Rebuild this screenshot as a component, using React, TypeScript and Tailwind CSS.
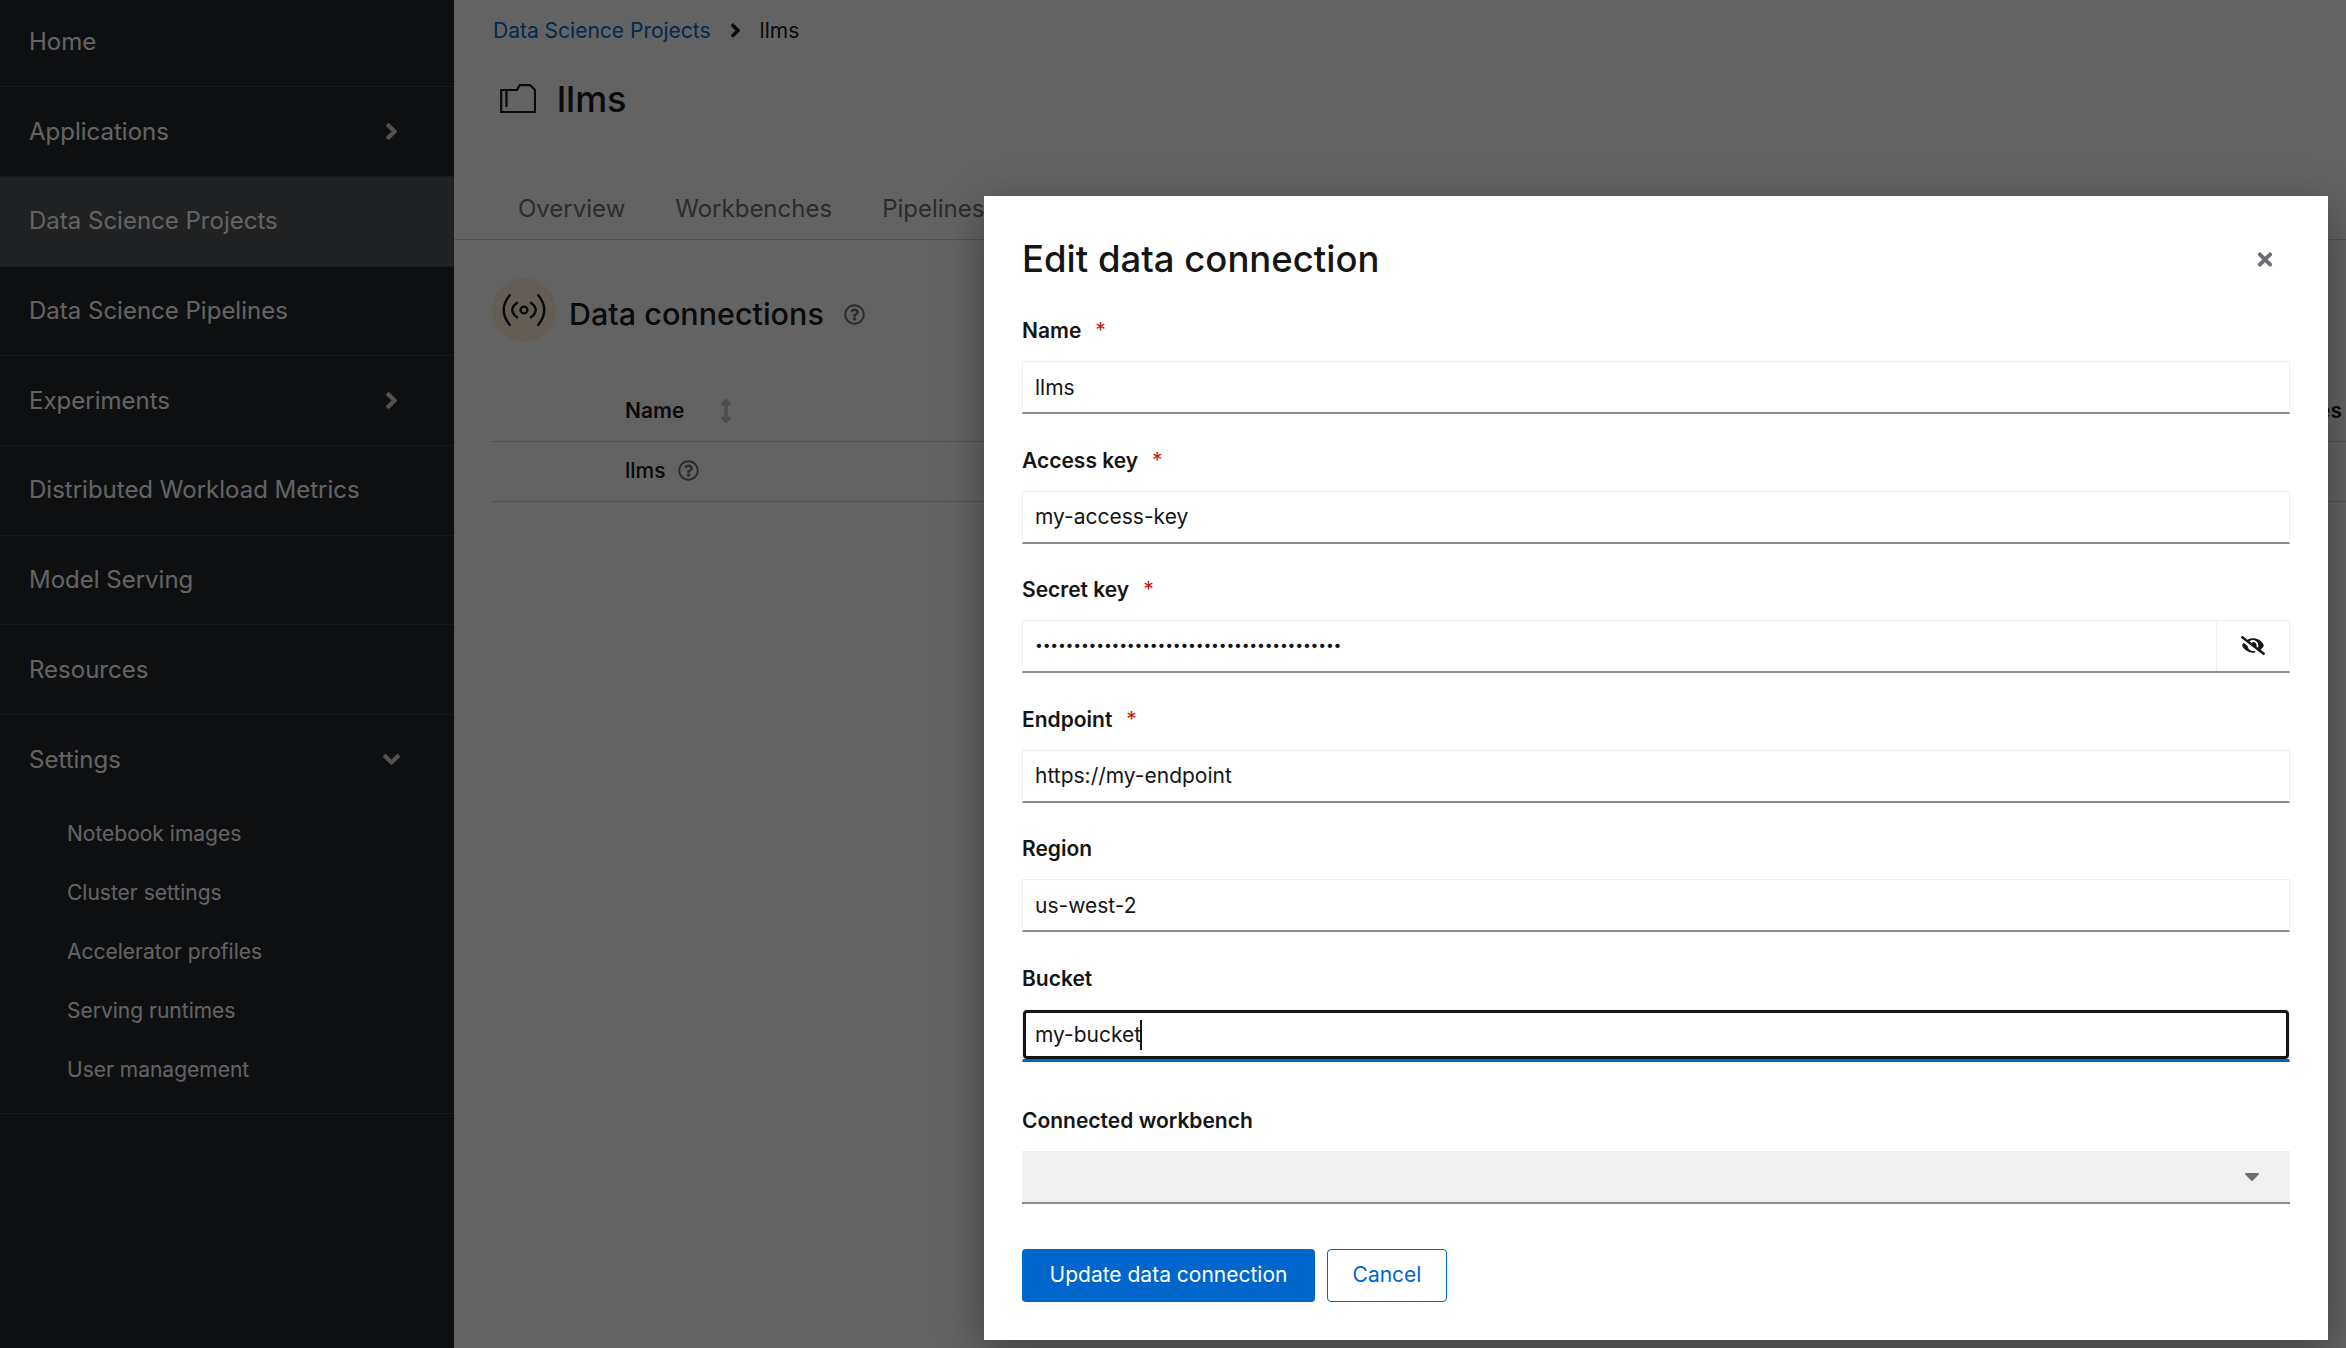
import React from 'react';
import {
  FaAngleDown,
  FaAngleRight,
  FaArrowsAltV,
  FaCaretDown,
  FaEyeSlash,
  FaRegQuestionCircle,
  FaTimes,
} from 'react-icons/fa';

const navItems = [
  { label: 'Home' },
  { label: 'Applications', arrow: true },
  { label: 'Data Science Projects', active: true },
  { label: 'Data Science Pipelines' },
  { label: 'Experiments', arrow: true },
  { label: 'Distributed Workload Metrics' },
  { label: 'Model Serving' },
  { label: 'Resources' },
];

const settingsItems = ['Notebook images', 'Cluster settings', 'Accelerator profiles', 'Serving runtimes', 'User management'];

const ProjectIcon = () => (
  <svg width="36" height="29" viewBox="0 0 36 29" fill="none" stroke="#151515" strokeWidth="2.2">
    <path d="M6.5 6H17l2.7-4.8h10.6L35 6v22H1.2V6h5.3v17" />
  </svg>
);

const ConnectionIcon = () => (
  <svg width="44" height="32" viewBox="0 0 44 32" fill="none" stroke="#151515" strokeWidth="2.4" strokeLinecap="round">
    <circle cx="22" cy="16" r="3.4" />
    <path d="M15 8.7Q5.6 16 15 23.3" />
    <path d="M29 8.7Q38.4 16 29 23.3" />
    <path d="M7.7 1.3Q-4.3 16 7.7 30.7" />
    <path d="M36.3 1.3Q48.3 16 36.3 30.7" />
  </svg>
);

const Field = ({ label, value, required }: { label: string; value: string; required?: boolean }) => (
  <div className="flex flex-col">
    <FieldLabel label={label} required={required} />
    <div className="flex h-[53px] items-center border border-b-2 border-[#f0f0f0] border-b-[#8a8d90] px-3 pt-[1px] text-[21px] text-[#151515]">
      {value}
    </div>
  </div>
);

const FieldLabel = ({ label, required }: { label: string; required?: boolean }) => (
  <div className="flex h-[47px] items-start pt-[1px] text-[21px] leading-[31px] font-semibold text-[#151515]">
    {label}
    {required && <span className="ml-[14px] text-[#c9190b] font-normal">*</span>}
  </div>
);

export default function App() {
  return (
    <div className="relative flex h-[1348px] w-[2346px] overflow-hidden bg-white font-['Inter',sans-serif] text-[#151515]">
      <aside className="w-[454px] shrink-0 bg-[#212427] text-[24px] text-white">
        <nav className="-mt-[2.5px]">
          {navItems.map((item) => (
            <div
              key={item.label}
              className={`flex h-[89.7px] items-center justify-between border-b border-[#3c3f42] pl-[29px] pr-[49px] ${item.active ? 'bg-[#4f5255]' : ''}`}
            >
              <span>{item.label}</span>
              {item.arrow && <FaAngleRight className="h-[27px] w-[27px] text-[#d2d2d2]" />}
            </div>
          ))}
          <div className="border-b border-[#3c3f42] pb-[13px]">
            <div className="flex h-[89.7px] items-center justify-between pl-[29px] pr-[49px]">
              <span>Settings</span>
              <FaAngleDown className="h-[27px] w-[27px] text-[#d2d2d2]" />
            </div>
            {settingsItems.map((item) => (
              <div key={item} className="-mt-[0.5px] flex h-[59.5px] items-center pl-[67px] text-[21px]">
                {item}
              </div>
            ))}
          </div>
        </nav>
      </aside>

      <main className="min-w-0 flex-1">
        <div className="flex h-[61px] items-center gap-[13px] pl-[39px] text-[21px]">
          <span className="text-[#0066cc]">Data Science Projects</span>
          <FaAngleRight className="h-[23px] w-[23px]" />
          <span>llms</span>
        </div>
        <div className="flex h-[77px] items-center gap-[21px] pb-[2px] pl-[46px] text-[36px] font-medium">
          <ProjectIcon />
          <span>llms</span>
        </div>
        <div className="flex h-[102px] items-end gap-[50px] border-b border-[#d2d2d2] pb-[12px] pl-[64px] text-[24px] text-[#6a6e73]">
          <span>Overview</span>
          <span>Workbenches</span>
          <span>Pipelines</span>
        </div>
        <div className="ml-[38px] mt-[38px] flex h-[64px] items-center">
          <div className="flex h-[64px] w-[64px] items-center justify-center rounded-full bg-[#fff0dc]">
            <ConnectionIcon />
          </div>
          <span className="ml-[13px] pt-[8px] text-[30.5px] font-medium">Data connections</span>
          <FaRegQuestionCircle className="ml-5 mt-[8px] h-[21px] w-[21px] text-[#6a6e73]" />
        </div>
        <div className="ml-[37px] mt-[38px] flex h-[62px] items-center justify-between border-b border-[#d2d2d2] pl-[134px] pr-[4px] text-[21px] font-semibold">
          <div className="flex items-center gap-[30px]">
            <span>Name</span>
            <FaArrowsAltV className="h-[24px] w-[24px] text-[#c8c8c8]" />
          </div>
          <span>Connected workbenches</span>
        </div>
        <div className="ml-[37px] flex h-[60px] items-center gap-3 border-b border-[#d2d2d2] pb-[2px] pl-[134px] text-[21px] font-medium">
          <span>llms</span>
          <FaRegQuestionCircle className="h-[21px] w-[21px] text-[#6a6e73]" />
        </div>
      </main>

      {/* backdrop + modal sit over the page */}
      <div className="absolute inset-0 flex items-end justify-end bg-[rgba(3,3,3,0.62)] pb-[8px] pr-[18px]">
        <div className="flex h-[1144px] w-[1344px] flex-col bg-white px-[38px] shadow-[0_12px_40px_rgba(3,3,3,0.35)]">
          <div className="flex h-[118px] shrink-0 items-center justify-between pr-[16px] pt-[8px]">
            <h1 className="text-[36.5px] leading-none font-medium">Edit data connection</h1>
            <FaTimes className="h-[21px] w-[18px] text-[#6a6e73]" />
          </div>
          <div className="flex flex-col gap-[29.5px]">
            <Field label="Name" value="llms" required />
            <Field label="Access key" value="my-access-key" required />
            <div className="flex flex-col">
              <FieldLabel label="Secret key" required />
              <div className="flex h-[53px] items-center border border-b-2 border-[#f0f0f0] border-b-[#8a8d90] text-[#151515]">
                <div className="flex-1 px-3 pb-[2px] text-[14px] leading-none tracking-[-0.22px]">{'•'.repeat(40)}</div>
                <div className="flex h-full w-[73px] items-center justify-center border-l border-[#f0f0f0] pb-[2px]">
                  <FaEyeSlash className="h-[21px] w-[24px]" />
                </div>
              </div>
            </div>
            <Field label="Endpoint" value="https://my-endpoint" required />
            <Field label="Region" value="us-west-2" />
            <div className="flex flex-col">
              <FieldLabel label="Bucket" />
              <div className="h-[53px] border border-b-[3px] border-[#f0f0f0] border-b-[#0066cc]">
                <div className="flex h-full items-center rounded-[4px] border-[3px] border-[#151515] px-[9px] pt-[1px] text-[21px]">
                  <span>my-bucket</span>
                  <span className="-ml-[1px] h-[30px] w-[2px] bg-[#151515]" />
                </div>
              </div>
            </div>
          </div>
          <div className="mt-[42px] flex flex-col">
            <FieldLabel label="Connected workbench" />
            <div className="flex h-[53px] items-center justify-end border-b-2 border-[#8a8d90] bg-[#f0f0f0] pr-[26px]">
              <FaCaretDown className="h-[24px] w-[24px] text-[#6a6e73]" />
            </div>
          </div>
          <div className="mt-[45px] flex gap-3 text-[21px]">
            <button className="flex h-[53px] w-[293px] items-center justify-center rounded-[4px] bg-[#0066cc] text-white">
              Update data connection
            </button>
            <button className="flex h-[53px] w-[120px] items-center justify-center rounded-[4px] border border-[#0066cc] text-[#0066cc]">
              Cancel
            </button>
          </div>
        </div>
      </div>
    </div>
  );
}
